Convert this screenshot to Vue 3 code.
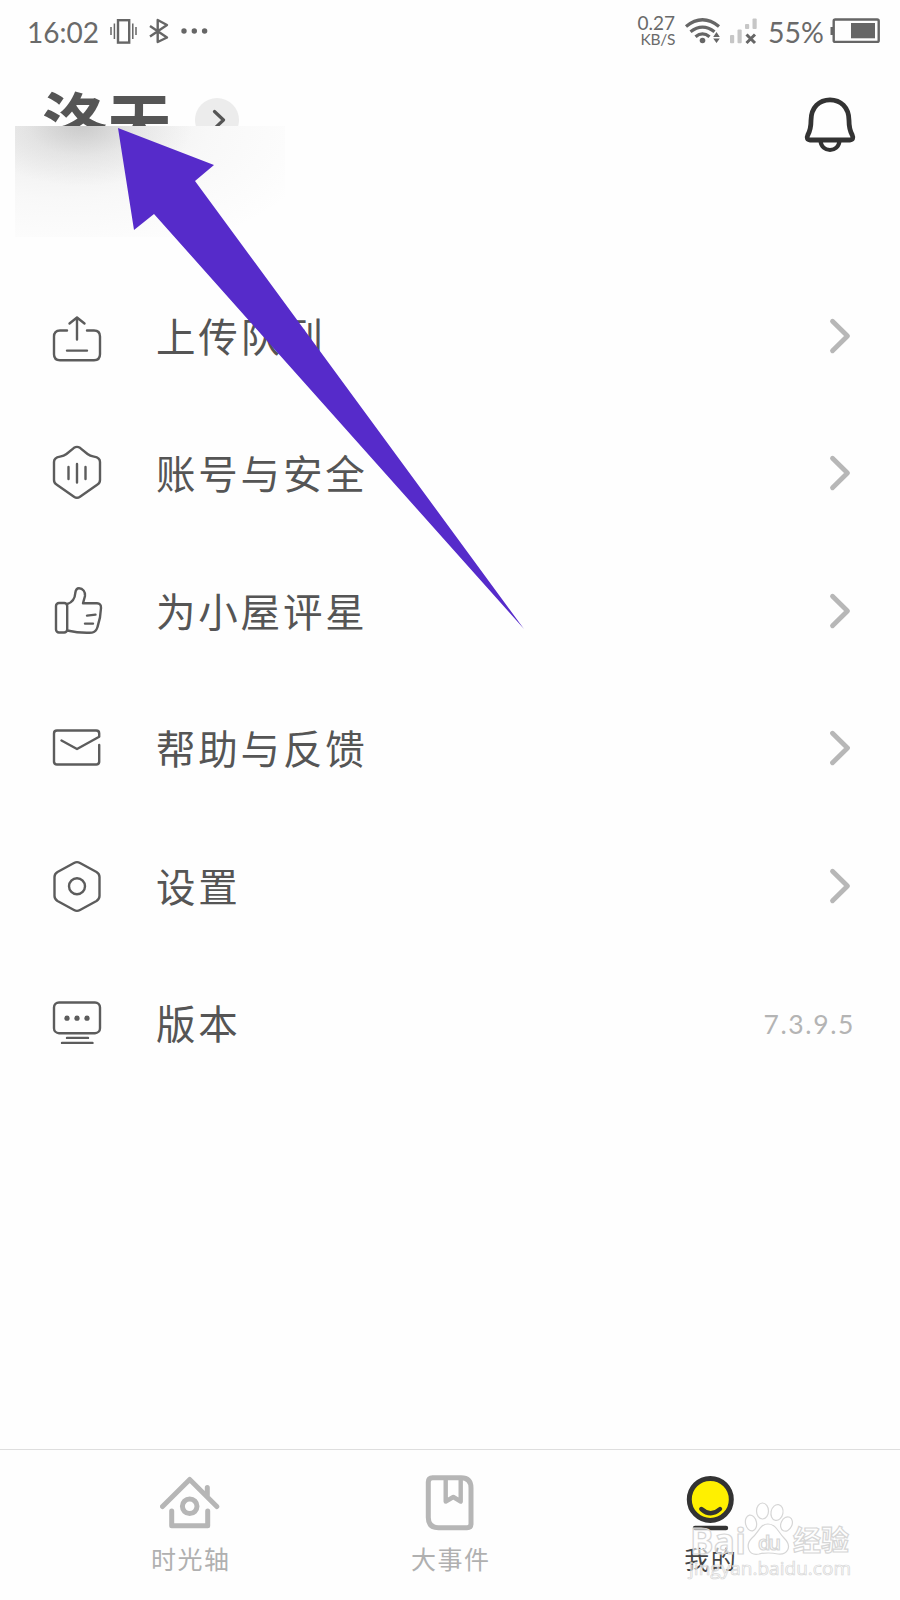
<script setup>
const rows = [
  { label: '上传队列', icon: 'upload' },
  { label: '账号与安全', icon: 'shield' },
  { label: '为小屋评星', icon: 'thumb' },
  { label: '帮助与反馈', icon: 'mail' },
  { label: '设置', icon: 'settings' },
  { label: '版本', icon: 'version', value: '7.3.9.5' },
]
</script>

<template>
  <div class="screen">
    <header class="status">
      <span class="time">16:02</span>
      <svg class="left-icons" width="104" height="40" viewBox="106 10 104 40">
        <g fill="none" stroke="#666" stroke-width="2.4">
          <rect x="118" y="20.2" width="11.2" height="22.4" />
          <path d="M114.4 23.5v15.5M132.8 23.5v15.5M111 27v8M136 27v8" stroke-width="1.5" />
          <path d="M150 26l17 11.500-9.300 4.500V20l9.300 5-17 11.500" stroke-linejoin="round" />
        </g>
        <g fill="#666">
          <circle cx="184" cy="31" r="2.7" /><circle cx="194.3" cy="31" r="2.7" /><circle cx="204.6" cy="31" r="2.7" />
        </g>
      </svg>
      <div class="speed"><span class="rate">0.27</span><span class="unit">KB/S</span></div>
      <svg class="signal" width="76" height="40" viewBox="684 10 76 40">
        <g fill="none" stroke="#666" stroke-width="3.3">
          <path d="M687 26.5Q703.500 13 720 26.500" />
          <path d="M691.500 31.800Q703.500 22.500 715.500 31.800" />
          <path d="M696.500 36.800Q703.500 31 710.500 36.800" />
        </g>
        <circle cx="703.500" cy="40.500" r="2.800" fill="#666" />
        <path d="M717.500 32l3.300 5h-6.600zM717.500 43l3.300-4.500h-6.600z" fill="#666" />
        <g fill="#c6c6c6">
          <rect x="731" y="35" width="4.200" height="8.300" rx="1" /><rect x="738.500" y="29.500" width="4.200" height="13.800" rx="1" />
          <rect x="746" y="24" width="4.200" height="5" rx="1" /><rect x="753.500" y="18.500" width="4.200" height="10.500" rx="1" />
        </g>
        <path d="M747.500 34.500l8.500 8.500M756 34.500l-8.500 8.500" stroke="#666" stroke-width="3" />
      </svg>
      <span class="percent">55%</span>
      <svg class="battery" width="50" height="30" viewBox="830 16 50 30">
        <rect x="833.700" y="19.500" width="45" height="22.400" rx="1.500" fill="none" stroke="#666" stroke-width="2.400" />
        <path d="M830.500 27h3v8h-3z" fill="#666" /><path d="M851 23h24v15.300h-24z" fill="#666" />
      </svg>
    </header>

    <section class="profile">
      <div class="identity">
        <span class="name">洛天</span>
        <span class="badge">
          <svg width="44" height="44" viewBox="0 0 44 44"><path d="M19.500 13.500L28.500 22 19.500 30.500" fill="none" stroke="#555" stroke-width="3.200" stroke-linecap="round" stroke-linejoin="round" /></svg>
        </span>
      </div>
      <svg class="bell" width="60" height="64" viewBox="800 92 60 64" fill="none" stroke="#333" stroke-width="4.800" stroke-linejoin="round">
        <path d="M811 120.500C811 107 819.500 99.800 830 99.800S849 107 849 120.500C849 128 850 131 852.200 135C853.600 138 852.600 140 850 140H810C807.400 140 806.400 138 807.800 135C810 131 811 128 811 120.500Z" />
        <path d="M820.500 141C822 153 838 153 839.500 141" stroke-width="4.200" />
      </svg>
      <div class="fade"></div>
    </section>

    <main class="menu">
      <div v-for="row in rows" :key="row.icon" class="row">
        <svg class="icon" width="60" height="60" viewBox="0 0 60 60">
          <template v-if="row.icon === 'upload'">
            <path d="M20 24.500H13Q7 24.500 7 30.500V48.300Q7 54.300 13 54.300H47Q53 54.300 53 48.300V30.500Q53 24.500 47 24.500H40M30 33.500V11.500M22.500 17.500L30 11.500L37.500 17.500M20 44.600H40" />
          </template>
          <template v-else-if="row.icon === 'shield'">
            <path d="M27 4.800Q30 3 33 4.800L40.500 11Q43 13 47 13.600Q53 14.500 53 19V37Q53 40 50.500 41.500L33 53.700Q30 56 27 53.700L9.500 41.500Q7 40 7 37V19Q7 14.500 13 13.600Q17 13 19.500 11Z" />
            <path d="M21.500 24V36M30 21V39.500M38.500 24V36" />
          </template>
          <template v-else-if="row.icon === 'thumb'">
            <rect x="9" y="22" width="11.200" height="29.500" rx="3" />
            <path d="M20.200 23C25 21.500 28 17 28.300 12C28.700 8.500 30 7.300 32 7.300C36 7.300 38.500 11 38 15L36 22.300H50Q54.200 22.300 54 27C53.800 34 52.500 40 50.500 46Q49 51 45 51.600C36 52.200 29 51.500 20.200 49.500" />
            <path d="M40 34.600L48.500 33.600M38 42.600H46" />
          </template>
          <template v-else-if="row.icon === 'mail'">
            <path d="M52.200 27V43.500Q52.200 46.500 49.200 46.500H10Q7 46.500 7 43.500V15.500Q7 12.500 10 12.500H49.200Q52.200 12.500 52.200 15.500V18.700L30 31L14.500 22.500" />
          </template>
          <template v-else-if="row.icon === 'settings'">
            <path d="M27 7Q30 5.300 33 7L49.500 16Q52.500 17.800 52.500 21V40Q52.500 43 49.500 45L33 54Q30 55.800 27 54L10.500 45Q7.500 43 7.500 40V21Q7.500 17.800 10.500 16Z" />
            <circle cx="30" cy="30.200" r="8" />
          </template>
          <template v-else>
            <rect x="7" y="9.500" width="46" height="30.700" rx="5" />
            <g class="dots"><circle cx="20" cy="25.200" r="2.600" /><circle cx="30" cy="25.200" r="2.600" /><circle cx="40" cy="25.200" r="2.600" /></g>
            <path d="M20 44.900H41M15 49.900H45.500" />
          </template>
        </svg>
        <span class="label">{{ row.label }}</span>
        <span v-if="row.value" class="value">{{ row.value }}</span>
        <svg v-else class="chevron" width="24" height="40" viewBox="0 0 24 40"><path d="M4.500 5.200L19.500 20L4.500 34.800" /></svg>
      </div>
    </main>

    <nav class="tabs">
      <div class="tab">
        <svg width="60" height="60" viewBox="0 0 60 60">
          <path d="M2.500 34.500L29.700 7.500L56.800 34.500M47.300 15.500V24M11.700 39V53.700H47.700V39" />
          <circle cx="29.700" cy="34.300" r="7.300" />
        </svg>
        <span>时光轴</span>
      </div>
      <div class="tab">
        <svg width="60" height="60" viewBox="0 0 60 60">
          <path d="M12.500 5.800H41Q51 5.800 51 16V51.700Q51 55.700 47 55.700H18.500Q8.300 55.700 8.300 45.500V10Q8.300 5.800 12.500 5.800Z" />
          <path d="M25.700 7V29.500L33.300 25L40.700 29.500V7" stroke-width="4.400" />
        </svg>
        <span>大事件</span>
      </div>
      <div class="tab active">
        <svg width="60" height="60" viewBox="0 0 60 60">
          <circle cx="30.300" cy="27.400" r="21" fill="#fff000" />
          <path d="M21.300 37Q30.700 45.500 40 37" stroke-width="4.400" /><path d="M15 56H46" stroke-width="4.400" />
        </svg>
        <span>我的</span>
      </div>
    </nav>

    <svg class="pointer" width="900" height="640" viewBox="0 0 900 640"><path d="M118 128L214 165L195 181L524 629L154 214L134 230Z" fill="#562bca" /></svg>

    <svg class="watermark" width="190" height="90" viewBox="680 1495 190 90">
      <g fill="#fff" fill-opacity=".6" stroke="#d6d6d6" stroke-width="1.200">
        <ellipse cx="751" cy="1523" rx="5.500" ry="8" transform="rotate(-12 751 1523)" />
        <ellipse cx="762.500" cy="1511" rx="6" ry="8" />
        <ellipse cx="777" cy="1512.500" rx="6" ry="8" transform="rotate(12 777 1512.500)" />
        <ellipse cx="786.500" cy="1524" rx="5.500" ry="7.500" transform="rotate(25 786.500 1524)" />
        <path d="M768 1524C776 1524 778 1532 784 1538C793 1547 787 1555 778 1554Q768 1552 759 1554C748 1556 745 1545 752 1538C759 1532 760 1524 768 1524Z" />
        <text class="latin heavy" x="690" y="1554" font-size="35" textLength="56">Bai</text>
        <text class="latin" x="758" y="1550" font-size="20" font-weight="600" textLength="23">du</text>
        <text class="han" x="793" y="1551" font-size="28" font-weight="700" textLength="56">经验</text>
        <text class="latin" x="689" y="1575" font-size="19" stroke-width=".7" textLength="162">jingyan.baidu.com</text>
      </g>
    </svg>
  </div>
</template>

<style>
html, body { margin: 0; background: #fefefe; }
</style>

<style scoped>
.screen { position: relative; display: flex; flex-direction: column; width: 900px; height: 1600px; overflow: hidden; background: #fefefe; color: #555; font-family: Lato, "Noto Sans CJK SC", sans-serif; }
.status { display: flex; align-items: center; height: 62px; flex: none; box-sizing: border-box; padding: 0 20px 0 27px; color: #6a6a6a; }
.status svg { flex: none; }
.time { width: 79px; font-size: 28px; line-height: 40px; padding-top: 1px; box-sizing: border-box; }
.left-icons { margin-top: -2px; }
.speed { display: flex; flex-direction: column; align-items: flex-end; width: 55px; margin-left: auto; margin-right: 8px; line-height: 17px; }
.rate { font-size: 19px; }
.unit { font-size: 15.5px; letter-spacing: -.3px; }
.signal { margin-top: -2px; }
.percent { width: 61px; margin-left: 9px; font-size: 28.5px; line-height: 40px; white-space: nowrap; padding-top: 1px; }
.battery { margin-left: 1px; }
.profile { position: relative; display: flex; justify-content: space-between; align-items: flex-start; height: 205px; flex: none; padding: 0 40px 0 42px; }
.identity { display: flex; height: 64px; overflow: hidden; }
.name { width: 153px; font-size: 65px; line-height: 66px; padding-top: 27px; font-weight: 700; white-space: nowrap; }
.badge { width: 44px; height: 44px; margin-top: 36px; border-radius: 50%; background: #ececec; }
.bell { margin-top: 30px; }
.fade { position: absolute; left: 15px; top: 64px; width: 270px; height: 111px; background: radial-gradient(ellipse 110px 60px at 68px 0, rgba(100,100,100,.24), rgba(120,120,120,.09) 50%, transparent), radial-gradient(ellipse 265px 135px at 50px 0, rgba(120,120,120,.15), rgba(140,140,140,.05) 55%, transparent); }
.menu { display: flex; flex-direction: column; flex: 1; }
.row { display: flex; align-items: center; height: 137.5px; flex: none; padding: 0 48px 0 47px; }
.icon { flex: none; fill: none; stroke: #5c5c5c; stroke-width: 2.4; stroke-linecap: round; stroke-linejoin: round; }
.dots { fill: #5c5c5c; stroke: none; }
.label { flex: 1; margin-left: 49px; font-size: 39.5px; line-height: 56px; letter-spacing: 2.8px; padding-top: 2px; }
.chevron { fill: none; stroke: #b7b7b7; stroke-width: 4.8; stroke-linecap: round; stroke-linejoin: round; }
.value { font-size: 26.5px; letter-spacing: 1.6px; color: #b4b4b4; margin-right: -3px; padding-top: 2px; }
.tabs { display: grid; grid-template-columns: repeat(3, 260px); justify-content: center; height: 151px; flex: none; box-sizing: border-box; border-top: 1px solid #dedede; }
.tab { display: flex; flex-direction: column; align-items: center; padding-top: 22px; color: #b0b0b0; font-size: 25px; line-height: 36px; letter-spacing: 1.5px; }
.tab svg { fill: none; stroke: #b6b6b6; stroke-width: 5; stroke-linecap: round; stroke-linejoin: round; }
.tab span { margin-top: 9px; margin-right: -1.5px; }
.tab.active { color: #444; }
.tab.active svg { stroke: #333; }
.pointer { position: absolute; left: 0; top: 0; }
.watermark { position: absolute; left: 680px; top: 1495px; }
.latin { font-family: "Open Sans", sans-serif; }
.heavy { font-weight: 700; }
.han { font-family: "Noto Sans CJK SC", sans-serif; }
</style>
